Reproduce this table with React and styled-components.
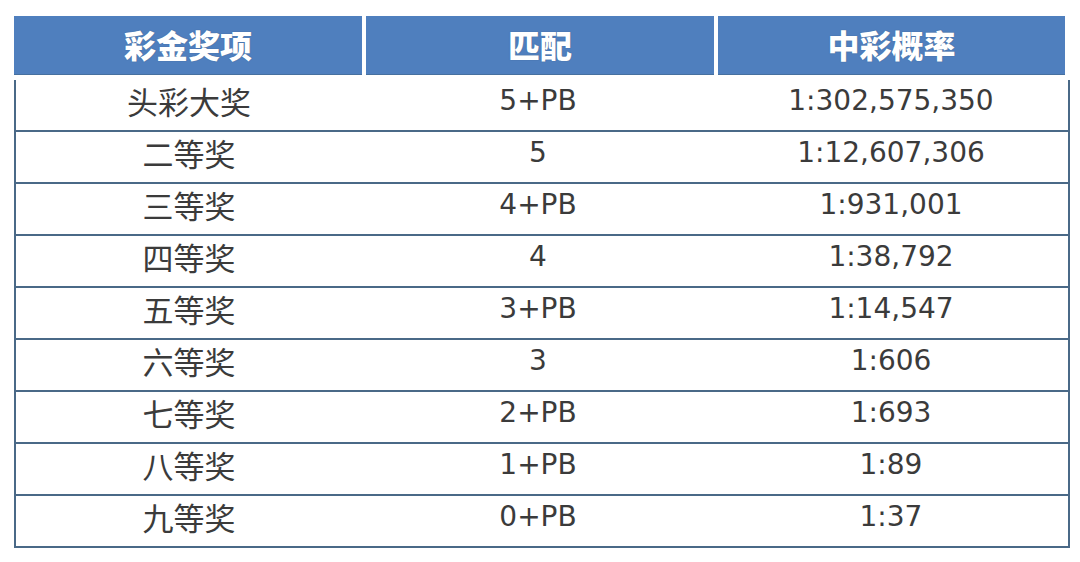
import React from 'react';
import styled, { createGlobalStyle } from 'styled-components';

const GlobalStyle = createGlobalStyle`
  html, body {
    margin: 0;
    padding: 0;
    background: #ffffff;
  }
  body {
    font-family: "DejaVu Sans", "Noto Sans CJK SC", sans-serif;
  }
`;

const Page = styled.div`
  width: 1080px;
  height: 562px;
  padding: 16px 0 0 14px;
  box-sizing: border-box;
  overflow: hidden;
`;

const HeaderRow = styled.div`
  display: grid;
  grid-template-columns: 348px 348px 347px;
  column-gap: 4px;
  height: 59px;
`;

const HeadCell = styled.div`
  background: #4f7fbe;
  border-bottom: 1px solid #46709f;
  color: #ffffff;
  font-family: "Noto Sans CJK SC", sans-serif;
  font-weight: 900;
  font-size: 32px;
  display: flex;
  align-items: center;
  justify-content: center;
  padding-bottom: 2px;
  box-sizing: border-box;
  text-shadow: 0 0 1px rgba(40, 60, 90, 0.6);
`;

const Body = styled.div`
  margin-top: 5px;
  width: 1056px;
  border-left: 2px solid #4a6987;
  border-right: 2px solid #4a6987;
  box-sizing: border-box;
`;

const Row = styled.div`
  display: grid;
  grid-template-columns: 346px 352px 354px;
  grid-template-rows: 50px;
  height: 52px;
  border-bottom: 2px solid #4a6987;
  box-sizing: border-box;
`;

const Cell = styled.div`
  display: flex;
  align-items: center;
  justify-content: center;
  line-height: 1;
  padding-bottom: ${(p) => (p.$cjk ? '9px' : '8px')};
  box-sizing: border-box;
  color: #3b3b3b;
  font-size: ${(p) => (p.$cjk ? '31px' : '28px')};
  font-family: ${(p) =>
    p.$cjk
      ? '"Noto Sans CJK SC", sans-serif'
      : '"DejaVu Sans", "Noto Sans CJK SC", sans-serif'};
`;

const rows = [
  ['头彩大奖', '5+PB', '1:302,575,350'],
  ['二等奖', '5', '1:12,607,306'],
  ['三等奖', '4+PB', '1:931,001'],
  ['四等奖', '4', '1:38,792'],
  ['五等奖', '3+PB', '1:14,547'],
  ['六等奖', '3', '1:606'],
  ['七等奖', '2+PB', '1:693'],
  ['八等奖', '1+PB', '1:89'],
  ['九等奖', '0+PB', '1:37'],
];

const App = () => {
  return (
    <Page>
      <GlobalStyle />
      <HeaderRow>
        <HeadCell>彩金奖项</HeadCell>
        <HeadCell>匹配</HeadCell>
        <HeadCell>中彩概率</HeadCell>
      </HeaderRow>
      <Body>
        {rows.map((r) => (
          <Row key={r[0]}>
            <Cell $cjk>{r[0]}</Cell>
            <Cell>{r[1]}</Cell>
            <Cell>{r[2]}</Cell>
          </Row>
        ))}
      </Body>
    </Page>
  );
};

export default App;
